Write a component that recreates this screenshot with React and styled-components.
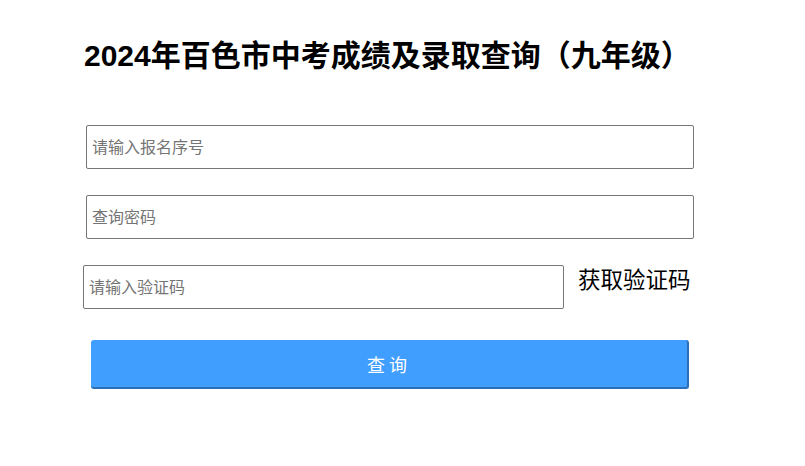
import React from 'react'
import styled, { createGlobalStyle } from 'styled-components'

const GlobalStyle = createGlobalStyle`
  body{
    margin:0;
    background:#fff;
    font-family:'Noto Sans CJK SC','Noto Sans',sans-serif;
  }
`

const Page = styled.div`
  width:805px;
  padding:36px 0 0 84px;
  box-sizing:border-box;
`

const Title = styled.h1`
  margin:0;
  font-size:30px;
  line-height:40px;
  font-weight:700;
  color:#000;
  font-family:'Liberation Sans','Noto Sans CJK SC',sans-serif;
`

const Form = styled.form`
  display:flex;
  flex-direction:column;
  margin-top:49px;
`

const Row = styled.div`
  display:flex;
  align-items:flex-start;
  margin-left:${p => p.offset || 0}px;
  margin-bottom:26px;
`

const Input = styled.input`
  width:${p => p.w}px;
  height:44px;
  box-sizing:border-box;
  border:1px solid #767676;
  border-radius:2px;
  padding:0 5px 2px;
  font-size:16px;
  font-family:'Noto Sans CJK SC',sans-serif;
  outline:none;
  &::placeholder{
    color:#757575;
  }
`

const CodeLink = styled.span`
  margin-left:14px;
  font-size:22.5px;
  line-height:26px;
  color:#000;
  cursor:pointer;
`

const Submit = styled.button`
  margin:5px 0 0 7px;
  width:598px;
  height:49px;
  border:none;
  border-right:2px solid #2b6fb8;
  border-bottom:2px solid #2b6fb8;
  border-radius:3px;
  background:#409eff;
  color:#fff;
  font-size:18px;
  letter-spacing:4px;
  font-family:'Noto Sans CJK SC',sans-serif;
  cursor:pointer;
`

const App = () => {
  return (
    <Page>
      <GlobalStyle />
      <Title>2024年百色市中考成绩及录取查询（九年级）</Title>
      <Form onSubmit={e => e.preventDefault()}>
        <Row offset={2}>
          <Input w={608} placeholder="请输入报名序号" />
        </Row>
        <Row offset={2}>
          <Input w={608} type="password" placeholder="查询密码" />
        </Row>
        <Row offset={-1}>
          <Input w={481} placeholder="请输入验证码" />
          <CodeLink>获取验证码</CodeLink>
        </Row>
        <Submit type="submit">查询</Submit>
      </Form>
    </Page>
  )
}

export default App
